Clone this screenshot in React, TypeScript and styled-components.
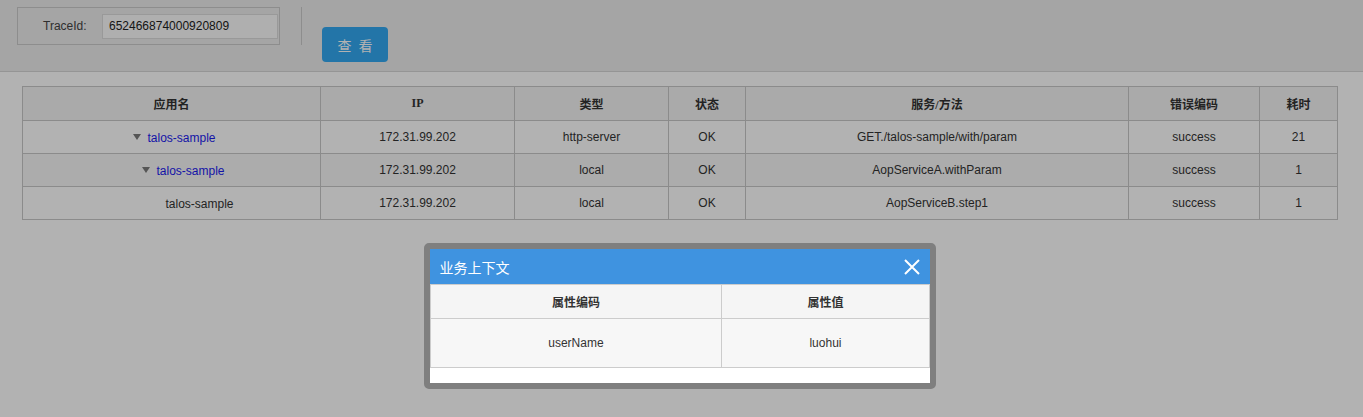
import React from "react";
import styled, { createGlobalStyle } from "styled-components";

const GlobalStyle = createGlobalStyle`
  html, body { margin: 0; padding: 0; background: #ffffff; }
  body {
    font-family: "Liberation Sans", "Noto Sans CJK SC", sans-serif;
    font-size: 12px;
    color: #333333;
  }
  * { box-sizing: border-box; }
`;

const Page = styled.div`
  min-height: 417px;
  background: #ffffff;
`;

const TopBar = styled.div`
  height: 72px;
  background: #ececec;
  border-bottom: 1px solid #d6d6d6;
  display: flex;
  align-items: flex-start;
  padding: 7px 0 0 17px;
`;

const SearchBox = styled.div`
  width: 263px;
  height: 38px;
  border: 1px solid #cbcbcb;
  display: flex;
  align-items: center;
  padding-left: 25px;
`;

const Label = styled.span`
  font-size: 12px;
  color: #444;
  width: 59px;
`;

const Input = styled.input`
  width: 176px;
  height: 25px;
  border: 1px solid #dcdcdc;
  background: #fbfbfb;
  padding: 0 0 0 6px;
  font-family: "Liberation Sans", sans-serif;
  font-size: 12px;
  color: #222;
  outline: none;
`;

const Divider = styled.div`
  width: 1px;
  height: 38px;
  background: #cbcbcb;
  margin-left: 21px;
`;

const SearchButton = styled.button`
  margin: 20px 0 0 20px;
  width: 66px;
  height: 35px;
  border: none;
  border-radius: 4px;
  background: #33a8f1;
  color: #ffffff;
  font-family: "Noto Sans CJK SC", sans-serif;
  font-size: 14px;
  letter-spacing: 2px;
  padding: 0 0 0 2px;
`;

const Main = styled.div`
  padding: 14px 26px 0 22px;
`;

const TraceTable = styled.table`
  width: 100%;
  border-collapse: collapse;
  table-layout: fixed;
  border: 1px solid #c8c8c8;
`;

const HeadCell = styled.th`
  height: 34px;
  padding: 0;
  border: 1px solid #c8c8c8;
  background: #f4f4f4;
  font-family: "Liberation Serif", "Noto Sans CJK SC", serif;
  font-weight: bold;
  font-size: 12px;
  color: #333;
  text-align: center;
`;

const Row = styled.tr<{ $shade?: boolean }>`
  background: ${(p) => (p.$shade ? "#f6f6f6" : "#ffffff")};
`;

const Cell = styled.td`
  height: 33px;
  padding: 0;
  border: 1px solid #c8c8c8;
  text-align: center;
  font-size: 12px;
  color: #333;
`;

const NameCell = styled(Cell)`
  padding-left: 6px;
`;

const Indent = styled.span<{ $level: number }>`
  display: inline-block;
  width: ${(p) => p.$level * 18}px;
`;

const Toggle = styled.span`
  display: inline-block;
  width: 14px;
  text-align: left;
  vertical-align: middle;
`;

const Triangle = styled.span`
  display: inline-block;
  width: 0;
  height: 0;
  border-left: 4px solid transparent;
  border-right: 4px solid transparent;
  border-top: 6px solid #7a7a7a;
  vertical-align: middle;
  margin-top: -2px;
`;

const AppLink = styled.a`
  color: #1c1cf0;
  text-decoration: none;
  vertical-align: middle;
`;

const AppText = styled.span`
  vertical-align: middle;
`;

const Overlay = styled.div`
  position: fixed;
  inset: 0;
  background: rgba(0, 0, 0, 0.3);
`;

const Modal = styled.div`
  position: fixed;
  top: 243px;
  left: 50%;
  margin-left: -258px;
  width: 512px;
  border: 6px solid #7f7f7f;
  border-radius: 5px;
  background: #ffffff;
  padding-bottom: 15px;
`;

const ModalHeader = styled.div`
  height: 35px;
  background: #3f93e0;
  display: flex;
  align-items: center;
  justify-content: space-between;
  padding: 0 10px;
`;

const ModalTitle = styled.span`
  font-family: "Noto Sans CJK SC", sans-serif;
  font-size: 14px;
  color: #ffffff;
`;

const CloseButton = styled.button`
  border: none;
  background: transparent;
  padding: 0;
  width: 16px;
  height: 16px;
  display: flex;
`;

const AttrTable = styled.table`
  width: 100%;
  border-collapse: collapse;
  table-layout: fixed;
  border: 1px solid #cccccc;
`;

const AttrHead = styled.th`
  height: 34px;
  padding: 0;
  border: 1px solid #cccccc;
  background: #f5f5f5;
  font-family: "Liberation Sans", "Noto Sans CJK SC", sans-serif;
  font-size: 12px;
  font-weight: bold;
  color: #333;
`;

const AttrCell = styled.td`
  height: 49px;
  padding: 0;
  border: 1px solid #cccccc;
  background: #f7f7f7;
  text-align: center;
  font-size: 12px;
  color: #333;
`;

type Span = { level: number; expandable: boolean; ip: string; type: string; status: string; method: string; code: string; cost: string; shade?: boolean };

const spans: Span[] = [
  { level: 0, expandable: true, ip: "172.31.99.202", type: "http-server", status: "OK", method: "GET./talos-sample/with/param", code: "success", cost: "21" },
  { level: 1, expandable: true, ip: "172.31.99.202", type: "local", status: "OK", method: "AopServiceA.withParam", code: "success", cost: "1", shade: true },
  { level: 2, expandable: false, ip: "172.31.99.202", type: "local", status: "OK", method: "AopServiceB.step1", code: "success", cost: "1" },
];

const cols = [298, 194, 154, 77, 383, 131, 78];

export default function App() {
  return (
    <>
      <GlobalStyle />
      <Page>
        <TopBar>
          <SearchBox>
            <Label>TraceId:</Label>
            <Input defaultValue="652466874000920809" />
          </SearchBox>
          <Divider />
          <SearchButton>查 看</SearchButton>
        </TopBar>
        <Main>
          <TraceTable>
            <colgroup>
              {cols.map((w, i) => (
                <col key={i} style={{ width: w }} />
              ))}
            </colgroup>
            <thead>
              <tr>
                <HeadCell>应用名</HeadCell>
                <HeadCell>IP</HeadCell>
                <HeadCell>类型</HeadCell>
                <HeadCell>状态</HeadCell>
                <HeadCell>服务/方法</HeadCell>
                <HeadCell>错误编码</HeadCell>
                <HeadCell>耗时</HeadCell>
              </tr>
            </thead>
            <tbody>
              {spans.map((s, i) => (
                <Row key={i} $shade={s.shade}>
                  <NameCell>
                    <Indent $level={s.level} />
                    <Toggle>{s.expandable && <Triangle />}</Toggle>
                    {s.expandable ? (
                      <AppLink href="#">talos-sample</AppLink>
                    ) : (
                      <AppText>talos-sample</AppText>
                    )}
                  </NameCell>
                  <Cell>{s.ip}</Cell>
                  <Cell>{s.type}</Cell>
                  <Cell>{s.status}</Cell>
                  <Cell>{s.method}</Cell>
                  <Cell>{s.code}</Cell>
                  <Cell>{s.cost}</Cell>
                </Row>
              ))}
            </tbody>
          </TraceTable>
        </Main>
      </Page>
      <Overlay />
      <Modal>
        <ModalHeader>
          <ModalTitle>业务上下文</ModalTitle>
          <CloseButton aria-label="close">
            <svg width="16" height="16" viewBox="0 0 16 16">
              <path d="M1 1 L15 15 M15 1 L1 15" stroke="#ffffff" strokeWidth="2" fill="none" />
            </svg>
          </CloseButton>
        </ModalHeader>
        <AttrTable>
          <colgroup>
            <col style={{ width: "58.5%" }} />
            <col />
          </colgroup>
          <thead>
            <tr>
              <AttrHead>属性编码</AttrHead>
              <AttrHead>属性值</AttrHead>
            </tr>
          </thead>
          <tbody>
            <tr>
              <AttrCell>userName</AttrCell>
              <AttrCell>luohui</AttrCell>
            </tr>
          </tbody>
        </AttrTable>
      </Modal>
    </>
  );
}
